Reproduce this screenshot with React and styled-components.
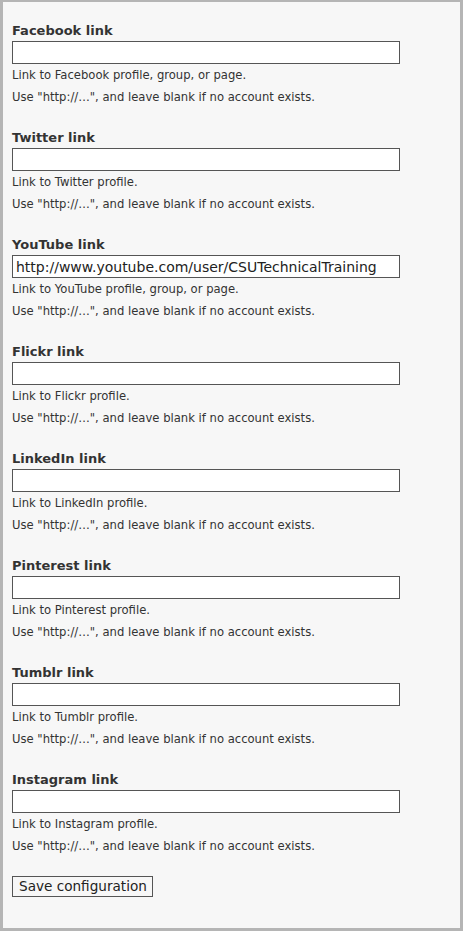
import React from "react";
import styled, { createGlobalStyle } from "styled-components";

const GlobalStyle = createGlobalStyle`
  html, body { margin: 0; padding: 0; background: #ffffff; }
  body { font-family: "DejaVu Sans", Verdana, sans-serif; }
`;

const Frame = styled.div`
  box-sizing: border-box;
  width: 463px;
  height: 931px;
  background: #f7f7f7;
  border-style: solid;
  border-color: #b5b5b5;
  border-width: 2px 3px 3px 3px;
  padding: 21px 9px 0 9px;
`;

const Form = styled.form`
  display: flex;
  flex-direction: column;
`;

const Field = styled.div`
  display: flex;
  flex-direction: column;
  align-items: flex-start;

  & + & {
    margin-top: 22px;
  }
`;

const Label = styled.label`
  font-size: 13px;
  font-weight: bold;
  line-height: 16px;
  color: #333333;
  margin-bottom: 2px;
`;

const TextInput = styled.input`
  box-sizing: border-box;
  width: 388px;
  height: 23px;
  margin: 0;
  padding: 0 3px;
  border: 1px solid #555555;
  border-radius: 0;
  background: #ffffff;
  font-family: "DejaVu Sans", Verdana, sans-serif;
  font-size: 14px;
  color: #222222;
  outline: none;
`;

const Description = styled.div`
  font-size: 11.6px;
  line-height: 22px;
  color: #333333;
`;

const Actions = styled.div`
  padding-top: 19px;
`;

const SaveButton = styled.button`
  box-sizing: border-box;
  width: 141px;
  height: 21px;
  margin: 0;
  padding: 0 0 0 6px;
  border: 1px solid #555555;
  border-radius: 0;
  background: #f7f7f7;
  font-family: "DejaVu Sans", Verdana, sans-serif;
  font-size: 13.6px;
  line-height: 19px;
  color: #222222;
  text-align: left;
  white-space: nowrap;
`;

const fields = [
  { name: "Facebook", desc: "Link to Facebook profile, group, or page." },
  { name: "Twitter", desc: "Link to Twitter profile." },
  {
    name: "YouTube",
    desc: "Link to YouTube profile, group, or page.",
    value: "http://www.youtube.com/user/CSUTechnicalTraining",
  },
  { name: "Flickr", desc: "Link to Flickr profile." },
  { name: "LinkedIn", desc: "Link to LinkedIn profile." },
  { name: "Pinterest", desc: "Link to Pinterest profile." },
  { name: "Tumblr", desc: "Link to Tumblr profile." },
  { name: "Instagram", desc: "Link to Instagram profile." },
];

export default function App() {
  return (
    <>
      <GlobalStyle />
      <Frame>
        <Form onSubmit={(e) => e.preventDefault()}>
          {fields.map((f) => (
            <Field key={f.name}>
              <Label htmlFor={`link-${f.name}`}>{f.name} link</Label>
              <TextInput
                id={`link-${f.name}`}
                type="text"
                defaultValue={f.value || ""}
              />
              <Description>{f.desc}</Description>
              <Description>Use "http://…", and leave blank if no account exists.</Description>
            </Field>
          ))}
          <Actions>
            <SaveButton type="submit">Save configuration</SaveButton>
          </Actions>
        </Form>
      </Frame>
    </>
  );
}
